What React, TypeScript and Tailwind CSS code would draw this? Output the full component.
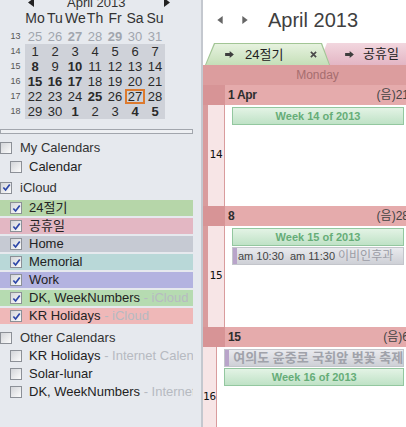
import React from 'react';

type Day = { n: number; dim?: boolean; bold?: boolean; today?: boolean };

const miniWeeks: { wk: number; days: Day[]; shade?: boolean }[] = [
  {
    wk: 13,
    days: [
      { n: 25, dim: true },
      { n: 26, dim: true },
      { n: 27, dim: true, bold: true },
      { n: 28, dim: true },
      { n: 29, dim: true, bold: true },
      { n: 30, dim: true },
      { n: 31, dim: true },
    ],
  },
  { wk: 14, shade: true, days: [1, 2, 3, 4, 5, 6, 7].map((n) => ({ n })) },
  {
    wk: 15,
    shade: true,
    days: [8, 9, 10, 11, 12, 13, 14].map((n) => ({ n, bold: n === 8 || n === 10 })),
  },
  {
    wk: 16,
    shade: true,
    days: [15, 16, 17, 18, 19, 20, 21].map((n) => ({ n, bold: n <= 17 })),
  },
  {
    wk: 17,
    shade: true,
    days: [22, 23, 24, 25, 26, 27, 28].map((n) => ({ n, bold: n === 25, today: n === 27 })),
  },
  {
    wk: 18,
    shade: true,
    days: [29, 30, 1, 2, 3, 4, 5].map((n, i) => ({ n, bold: i === 2 || i >= 5 })),
  },
];

const Tri = ({ dir, className }: { dir: 'l' | 'r'; className?: string }) => (
  <svg viewBox="0 0 6 9" className={className}>
    <polygon points={dir === 'l' ? '6,0 6,9 0,4.5' : '0,0 0,9 6,4.5'} fill="currentColor" />
  </svg>
);

const Check = ({ on }: { on?: boolean }) => (
  <span className="flex h-[12px] w-[12px] shrink-0 items-center justify-center border border-[#8c9097] bg-linear-to-br from-[#d3d5d9] to-[#fcfcfc]">
    {on && (
      <svg viewBox="0 0 10 10" className="h-[9px] w-[9px]">
        <path d="M1.5 5 L4 7.8 L8.6 1.6" stroke="#2d47a8" strokeWidth="1.9" fill="none" />
      </svg>
    )}
  </span>
);

const Group = ({ label, on, className }: { label: string; on?: boolean; className?: string }) => (
  <div className={`flex items-center gap-[8px] text-[13px] text-[#333] ${className ?? ''}`}>
    <Check on={on} />
    <span>{label}</span>
  </div>
);

const Item = ({
  label,
  suffix,
  on,
  bg,
  h = 'h-[19px]',
}: {
  label: string;
  suffix?: string;
  on?: boolean;
  bg?: string;
  h?: string;
}) => (
  <div className={`flex w-[193px] items-center gap-[7px] overflow-hidden whitespace-nowrap pl-[10px] text-[13px] text-[#222] ${h} ${bg ?? ''}`}>
    <Check on={on} />
    <span>
      {label}
      {suffix && <span className="text-[#b6bac1]"> - {suffix}</span>}
    </span>
  </div>
);

const Arrow = () => (
  <svg viewBox="0 0 10 8" className="h-[7px] w-[9px]">
    <path d="M0 2.4h5.2V0L10 4 5.2 8V5.6H0z" fill="#3e3e3e" />
  </svg>
);

const WeekBar = ({ n }: { n: number }) => (
  <div className="flex h-[18px] items-center justify-center border border-[#93c79f] bg-linear-to-b from-[#e3f3e5] to-[#bfe2c6] text-[11px] font-bold text-[#66ad78]">
    Week {n} of 2013
  </div>
);

const Appt = ({ children }: { children: React.ReactNode }) => (
  <div className="flex h-[18px] items-stretch overflow-hidden whitespace-nowrap border border-[#c3c5cb] bg-linear-to-b from-[#e9eaee] to-[#ced0d6]">
    <span className="w-[4px] shrink-0 bg-[#b9a4ca]" />
    <div className="flex items-center pl-[1px]">{children}</div>
  </div>
);

const Week = ({
  date,
  lunar,
  wk,
  children,
}: {
  date: string;
  lunar: string;
  wk: number;
  children: React.ReactNode;
}) => (
  <div>
    <div className="flex h-[20px]">
      <div className="w-[22px] bg-[#d79496]" />
      <div className="flex flex-1 items-center justify-between bg-[#e5abac] pl-[3px] pr-[1px] text-[12px] text-[#2e2e2e]">
        <span className="font-bold tracking-tight">{date}</span>
        <span className="whitespace-nowrap text-[12px] text-[#444]">{lunar}</span>
      </div>
    </div>
    <div className="flex h-[101px]">
      <div className="w-[5px] bg-[#d99c9d]" />
      <div className="flex w-[17px] items-center justify-center border-r border-[#d99c9d] bg-[#f7e5e6] font-['DejaVu_Sans_Mono',monospace] text-[11px] text-[#111]">
        {wk}
      </div>
      <div className="flex flex-1 flex-col gap-[1px] bg-white pl-[7px] pr-[6px] pt-[2px]">{children}</div>
    </div>
  </div>
);

export default function App() {
  return (
    <div className="flex h-[427px] w-[406px] overflow-hidden font-['Liberation_Sans','Noto_Sans_CJK_KR',sans-serif]">
      {/* navigation pane */}
      <div className="w-[201px] shrink-0 bg-[#e6e9ee]">
        <div className="-mt-[5px]">
          <div className="flex h-[15px] items-center text-[13px] text-[#333]">
            <Tri dir="l" className="ml-[28px] h-[9px] w-[6px] text-[#222]" />
            <span className="ml-[33px]">April 2013</span>
            <Tri dir="r" className="ml-[38px] h-[9px] w-[6px] text-[#222]" />
          </div>
          <div className="mt-[1px] flex h-[15px] items-center text-[14px] text-[#333]">
            <span className="w-[25px]" />
            {['Mo', 'Tu', 'We', 'Th', 'Fr', 'Sa', 'Su'].map((d) => (
              <span key={d} className="w-[20px] text-center">
                {d}
              </span>
            ))}
          </div>
          <div className="mt-[3px]">
            {miniWeeks.map((w) => (
              <div key={w.wk} className="flex h-[15px]">
                <span className="flex w-[25px] items-center justify-center pl-[6px] text-[9px] text-[#555]">{w.wk}</span>
                <div className={`flex ${w.shade ? 'bg-[#cfd2d9]' : ''}`}>
                  {w.days.map((d, i) => (
                    <span
                      key={i}
                      className={`flex w-[20px] items-center justify-center text-[13px] ${
                        d.dim ? 'text-[#a1a6ae]' : 'text-[#2a2a2a]'
                      } ${d.bold ? 'font-bold' : ''} ${d.today ? 'border-2 border-[#dd7a2e]' : ''}`}
                    >
                      {d.n}
                    </span>
                  ))}
                </div>
              </div>
            ))}
          </div>
        </div>

        <div className="mt-[10px] h-[5px] w-[193px] border border-[#a2a6ad] bg-[#eef0f3]" />

        <div className="mt-[4px]">
          <Group label="My Calendars" className="h-[19px]" />
          <Item label="Calendar" />
          <Group label="iCloud" on className="mt-[2px] h-[19px]" />
          <div className="mt-[3px] flex flex-col gap-[2px]">
            <Item label="24절기" on bg="bg-[#b6d6a9]" h="h-[16px]" />
            <Item label="공휴일" on bg="bg-[#e3b7c3]" h="h-[16px]" />
            <Item label="Home" on bg="bg-[#c6cad3]" h="h-[16px]" />
            <Item label="Memorial" on bg="bg-[#b9d8d8]" h="h-[16px]" />
            <Item label="Work" on bg="bg-[#b3b3e0]" h="h-[16px]" />
            <Item label="DK, WeekNumbers" suffix="iCloud" on bg="bg-[#b6dbb1]" h="h-[16px]" />
            <Item label="KR Holidays" suffix="iCloud" on bg="bg-[#efb8b8]" h="h-[16px]" />
          </div>
          <Group label="Other Calendars" className="mt-[4px] h-[19px]" />
          <Item label="KR Holidays" suffix="Internet Calendars" h="h-[18px]" />
          <Item label="Solar-lunar" h="h-[18px]" />
          <Item label="DK, WeekNumbers" suffix="Internet Calendars" h="h-[18px]" />
        </div>
      </div>

      <div className="w-[2px] shrink-0 bg-[#c4c8cf]" />

      {/* calendar view */}
      <div className="flex-1 overflow-hidden bg-white">
        <div className="w-[207px]">
          <div className="flex h-[40px] items-center text-[#666]">
            <Tri dir="l" className="ml-[14px] h-[8px] w-[6px]" />
            <Tri dir="r" className="ml-[19px] h-[8px] w-[6px]" />
            <span className="ml-[20px] text-[20px] text-[#3f3f3f]">April 2013</span>
          </div>

          <div className="flex h-[25px] items-end pl-[2px]">
            <div className="relative z-10 h-[22px] w-[125px] shrink-0 bg-[#a2c595] px-[1px] pt-[1px] [clip-path:polygon(9px_0,calc(100%_-_8px)_0,100%_100%,0_100%)]">
              <div className="flex h-full items-center bg-linear-to-b from-[#e6f2df] to-[#c5dfb8] pl-[19px] text-[13px] text-[#222] [clip-path:polygon(9px_0,calc(100%_-_8px)_0,100%_100%,0_100%)]">
                <Arrow />
                <span className="ml-[11px]">24절기</span>
                <svg viewBox="0 0 8 8" className="ml-[27px] h-[7px] w-[7px]">
                  <path d="M1 1L7 7M7 1L1 7" stroke="#4a4a4a" strokeWidth="1.9" />
                </svg>
              </div>
            </div>
            <div className="-ml-[12px] flex h-[22px] w-[100px] shrink-0 items-center bg-linear-to-b from-[#f2d7df] to-[#e3b6c4] pl-[27px] text-[13px] text-[#222] [clip-path:polygon(9px_0,100%_0,100%_100%,0_100%)]">
              <Arrow />
              <span className="ml-[9px]">공휴일</span>
            </div>
          </div>

          <div className="flex h-[20px] bg-[#dc9d9e]">
            <div className="w-[22px]" />
            <div className="flex flex-1 items-center justify-center text-[12px] text-[#a66d6f]">Monday</div>
          </div>

          <Week date="1 Apr" lunar="(음)21" wk={14}>
            <WeekBar n={14} />
          </Week>
          <Week date="8" lunar="(음)28" wk={15}>
            <WeekBar n={15} />
            <Appt>
              <span className="text-[11px] text-[#444]">am 10:30&nbsp;&nbsp;am 11:30</span>
              <span className="ml-[3px] text-[12px] text-[#9c9da6]">이비인후과</span>
            </Appt>
          </Week>
          <Week date="15" lunar="(음)6" wk={16}>
            <Appt>
              <span className="pl-[3px] text-[13px] font-bold text-[#a0a2aa]">여의도 윤중로 국회앞 벚꽃 축제</span>
            </Appt>
            <WeekBar n={16} />
          </Week>
        </div>
      </div>
    </div>
  );
}
